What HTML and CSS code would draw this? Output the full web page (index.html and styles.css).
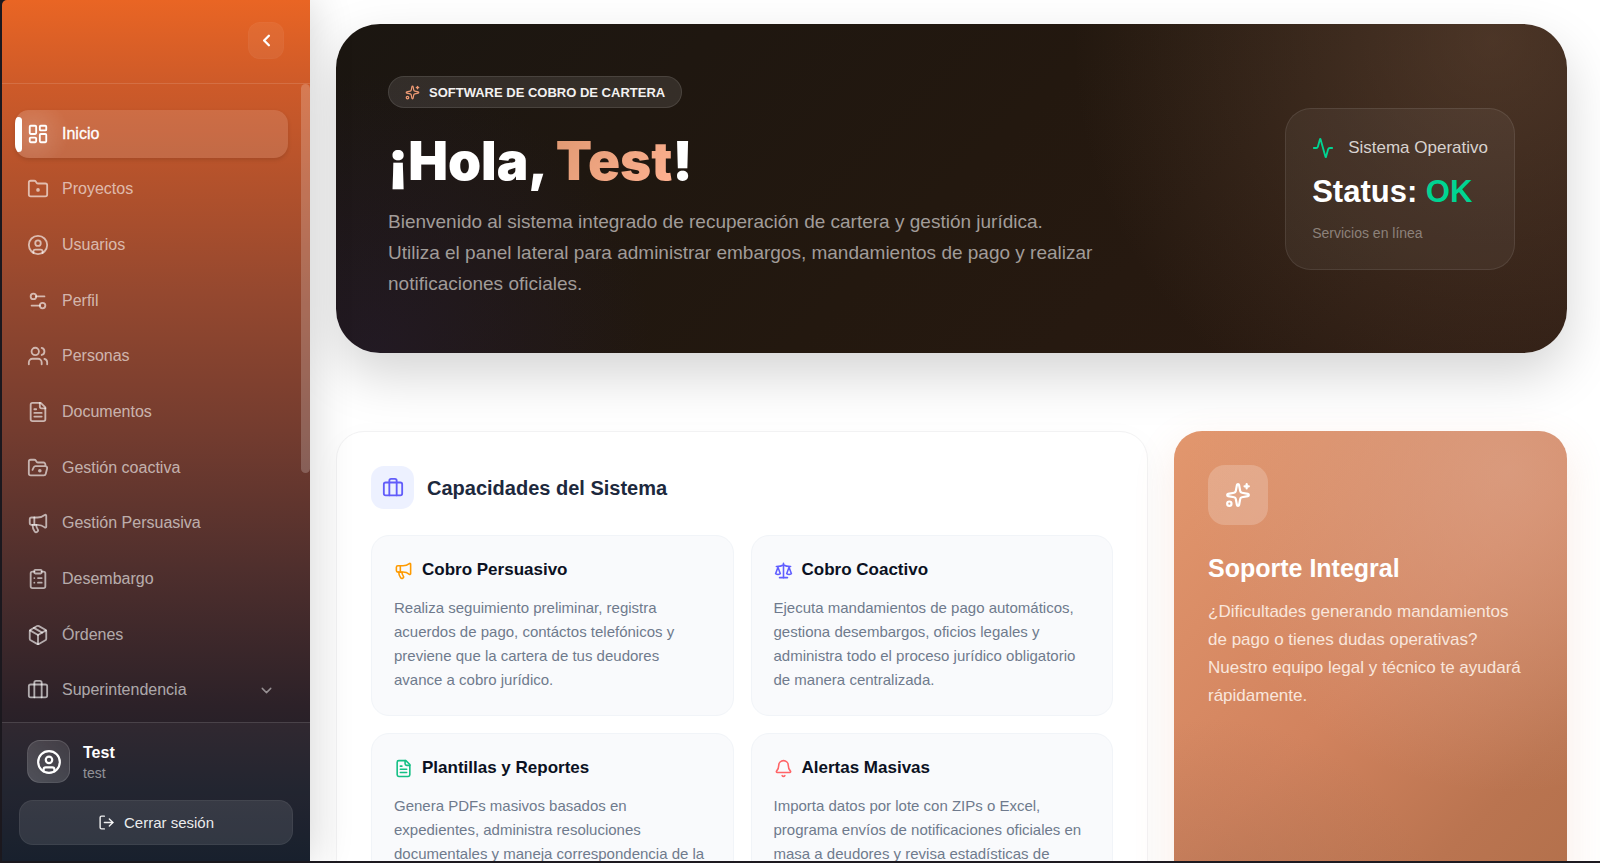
FILE: index.html
```html
<!DOCTYPE html>
<html lang="es">
<head>
<meta charset="utf-8">
<meta name="viewport" content="width=device-width, initial-scale=1">
<title>Inicio</title>
<link rel="stylesheet" href="styles.css">
</head>
<body>
<svg class="sprite" aria-hidden="true">
  <symbol id="i-dashboard" viewBox="0 0 24 24"><rect width="7" height="9" x="3" y="3" rx="1"/><rect width="7" height="5" x="14" y="3" rx="1"/><rect width="7" height="9" x="14" y="12" rx="1"/><rect width="7" height="5" x="3" y="16" rx="1"/></symbol>
  <symbol id="i-folder-dot" viewBox="0 0 24 24"><path d="M4 20h16a2 2 0 0 0 2-2V8a2 2 0 0 0-2-2h-7.93a2 2 0 0 1-1.66-.9l-.82-1.2A2 2 0 0 0 7.93 3H4a2 2 0 0 0-2 2v13c0 1.1.9 2 2 2Z"/><circle cx="12" cy="13" r="1"/></symbol>
  <symbol id="i-user" viewBox="0 0 24 24"><circle cx="12" cy="12" r="10"/><circle cx="12" cy="10" r="3"/><path d="M7 20.662V19a2 2 0 0 1 2-2h6a2 2 0 0 1 2 2v1.662"/></symbol>
  <symbol id="i-settings" viewBox="0 0 24 24"><path d="M14 17H5"/><path d="M19 7h-9"/><circle cx="17" cy="17" r="3"/><circle cx="7" cy="7" r="3"/></symbol>
  <symbol id="i-users" viewBox="0 0 24 24"><path d="M16 21v-2a4 4 0 0 0-4-4H6a4 4 0 0 0-4 4v2"/><path d="M16 3.128a4 4 0 0 1 0 7.744"/><path d="M22 21v-2a4 4 0 0 0-3-3.87"/><circle cx="9" cy="7" r="4"/></symbol>
  <symbol id="i-file" viewBox="0 0 24 24"><path d="M15 2H6a2 2 0 0 0-2 2v16a2 2 0 0 0 2 2h12a2 2 0 0 0 2-2V7Z"/><path d="M14 2v4a2 2 0 0 0 2 2h4"/><path d="M10 9H8"/><path d="M16 13H8"/><path d="M16 17H8"/></symbol>
  <symbol id="i-folder-open" viewBox="0 0 24 24"><path d="m6 14 1.45-2.9A2 2 0 0 1 9.24 10H20a2 2 0 0 1 1.94 2.5l-1.55 6a2 2 0 0 1-1.94 1.5H4a2 2 0 0 1-2-2V5c0-1.1.9-2 2-2h3.93a2 2 0 0 1 1.66.9l.82 1.2a2 2 0 0 0 1.66.9H18a2 2 0 0 1 2 2v2"/><circle cx="14" cy="15" r="1"/></symbol>
  <symbol id="i-megaphone" viewBox="0 0 24 24"><path d="M11 6a13 13 0 0 0 8.4-2.8A1 1 0 0 1 21 4v12a1 1 0 0 1-1.6.8A13 13 0 0 0 11 14H5a2 2 0 0 1-2-2V8a2 2 0 0 1 2-2z"/><path d="M6 14a12 12 0 0 0 2.4 7.2 2 2 0 0 0 3.2-2.4A8 8 0 0 1 10 14"/><path d="M8 6v8"/></symbol>
  <symbol id="i-clipboard" viewBox="0 0 24 24"><rect width="8" height="4" x="8" y="2" rx="1"/><path d="M16 4h2a2 2 0 0 1 2 2v14a2 2 0 0 1-2 2H6a2 2 0 0 1-2-2V6a2 2 0 0 1 2-2h2"/><path d="M12 11h4"/><path d="M12 16h4"/><path d="M8 11h.01"/><path d="M8 16h.01"/></symbol>
  <symbol id="i-package" viewBox="0 0 24 24"><path d="M11 21.73a2 2 0 0 0 2 0l7-4A2 2 0 0 0 21 16V8a2 2 0 0 0-1-1.73l-7-4a2 2 0 0 0-2 0l-7 4A2 2 0 0 0 3 8v8a2 2 0 0 0 1 1.73z"/><path d="M12 22V12"/><path d="M3.29 7 12 12l8.71-5"/><path d="m7.5 4.27 9 5.15"/></symbol>
  <symbol id="i-briefcase" viewBox="0 0 24 24"><path d="M16 20V4a2 2 0 0 0-2-2h-4a2 2 0 0 0-2 2v16"/><rect width="20" height="14" x="2" y="6" rx="2"/></symbol>
  <symbol id="i-down" viewBox="0 0 24 24"><path d="m6 9 6 6 6-6"/></symbol>
  <symbol id="i-left" viewBox="0 0 24 24"><path d="m15 18-6-6 6-6"/></symbol>
  <symbol id="i-logout" viewBox="0 0 24 24"><path d="m16 17 5-5-5-5"/><path d="M21 12H9"/><path d="M9 21H5a2 2 0 0 1-2-2V5a2 2 0 0 1 2-2h4"/></symbol>
  <symbol id="i-sparkles" viewBox="0 0 24 24"><path d="M11.017 2.814a1 1 0 0 1 1.966 0l1.051 5.558a2 2 0 0 0 1.594 1.594l5.558 1.051a1 1 0 0 1 0 1.966l-5.558 1.051a2 2 0 0 0-1.594 1.594l-1.051 5.558a1 1 0 0 1-1.966 0l-1.051-5.558a2 2 0 0 0-1.594-1.594l-5.558-1.051a1 1 0 0 1 0-1.966l5.558-1.051a2 2 0 0 0 1.594-1.594z"/><path d="M20 2v4"/><path d="M22 4h-4"/><circle cx="4" cy="20" r="2"/></symbol>
  <symbol id="i-activity" viewBox="0 0 24 24"><path d="M22 12h-2.48a2 2 0 0 0-1.93 1.46l-2.35 8.36a.25.25 0 0 1-.48 0L9.24 2.18a.25.25 0 0 0-.48 0l-2.35 8.36A2 2 0 0 1 4.49 12H2"/></symbol>
  <symbol id="i-scale" viewBox="0 0 24 24"><path d="M12 3v18"/><path d="m19 8 3 8a5 5 0 0 1-6 0zV7"/><path d="M3 7h1a17 17 0 0 0 8-2 17 17 0 0 0 8 2h1"/><path d="m5 8 3 8a5 5 0 0 1-6 0zV7"/><path d="M7 21h10"/></symbol>
  <symbol id="i-bell" viewBox="0 0 24 24"><path d="M10.268 21a2 2 0 0 0 3.464 0"/><path d="M3.262 15.326A1 1 0 0 0 4 17h16a1 1 0 0 0 .74-1.673C19.41 13.956 18 12.499 18 8A6 6 0 0 0 6 8c0 4.499-1.411 5.956-2.738 7.326"/></symbol>
</svg>
<div class="app">
  <aside class="sidebar">
    <div class="sidebar-head">
      <button class="collapse" type="button" aria-label="Contraer menú"><svg class="icon icon-md"><use href="#i-left"/></svg></button>
    </div>
    <nav class="nav">
      <ul class="nav-list">
        <li><a class="nav-link active" href="#inicio"><svg class="icon icon-lg"><use href="#i-dashboard"/></svg>Inicio</a></li>
        <li><a class="nav-link" href="#proyectos"><svg class="icon icon-lg"><use href="#i-folder-dot"/></svg>Proyectos</a></li>
        <li><a class="nav-link" href="#usuarios"><svg class="icon icon-lg"><use href="#i-user"/></svg>Usuarios</a></li>
        <li><a class="nav-link" href="#perfil"><svg class="icon icon-lg"><use href="#i-settings"/></svg>Perfil</a></li>
        <li><a class="nav-link" href="#personas"><svg class="icon icon-lg"><use href="#i-users"/></svg>Personas</a></li>
        <li><a class="nav-link" href="#documentos"><svg class="icon icon-lg"><use href="#i-file"/></svg>Documentos</a></li>
        <li><a class="nav-link" href="#coactiva"><svg class="icon icon-lg"><use href="#i-folder-open"/></svg>Gestión coactiva</a></li>
        <li><a class="nav-link" href="#persuasiva"><svg class="icon icon-lg"><use href="#i-megaphone"/></svg>Gestión Persuasiva</a></li>
        <li><a class="nav-link" href="#desembargo"><svg class="icon icon-lg"><use href="#i-clipboard"/></svg>Desembargo</a></li>
        <li><a class="nav-link" href="#ordenes"><svg class="icon icon-lg"><use href="#i-package"/></svg>Órdenes</a></li>
        <li><button class="nav-link" type="button" aria-expanded="false"><svg class="icon icon-lg"><use href="#i-briefcase"/></svg>Superintendencia<svg class="icon icon-sm chevron"><use href="#i-down"/></svg></button></li>
      </ul>
      <span class="scroll-thumb"></span>
    </nav>
    <div class="account">
      <div class="user">
        <span class="avatar"><svg class="icon icon-xl"><use href="#i-user"/></svg></span>
        <div class="user-text"><strong>Test</strong><span>test</span></div>
      </div>
      <button class="logout" type="button"><svg class="icon icon-sm"><use href="#i-logout"/></svg>Cerrar sesión</button>
    </div>
  </aside>
  <main class="main">
    <section class="hero">
      <div class="hero-text">
        <div class="badge"><svg class="icon icon-xs"><use href="#i-sparkles"/></svg>SOFTWARE DE COBRO DE CARTERA</div>
        <h1>¡Hola, <span class="name">Test</span>!</h1>
        <p>Bienvenido al sistema integrado de recuperación de cartera y gestión jurídica.<br>Utiliza el panel lateral para administrar embargos, mandamientos de pago y realizar notificaciones oficiales.</p>
      </div>
      <div class="status">
        <div class="status-head"><svg class="icon icon-lg"><use href="#i-activity"/></svg>Sistema Operativo</div>
        <div class="status-value">Status: <span>OK</span></div>
        <div class="status-note">Servicios en línea</div>
      </div>
    </section>
    <div class="panels">
      <section class="capabilities">
        <header class="cap-head">
          <span class="cap-icon"><svg class="icon icon-lg"><use href="#i-briefcase"/></svg></span>
          <h2>Capacidades del Sistema</h2>
        </header>
        <div class="features">
          <article class="feature">
            <h3><svg class="icon icon-md amber"><use href="#i-megaphone"/></svg>Cobro Persuasivo</h3>
            <p>Realiza seguimiento preliminar, registra acuerdos de pago, contáctos telefónicos y previene que la cartera de tus deudores avance a cobro jurídico.</p>
          </article>
          <article class="feature">
            <h3><svg class="icon icon-md indigo"><use href="#i-scale"/></svg>Cobro Coactivo</h3>
            <p>Ejecuta mandamientos de pago automáticos, gestiona desembargos, oficios legales y administra todo el proceso jurídico obligatorio de manera centralizada.</p>
          </article>
          <article class="feature">
            <h3><svg class="icon icon-md green"><use href="#i-file"/></svg>Plantillas y Reportes</h3>
            <p>Genera PDFs masivos basados en expedientes, administra resoluciones documentales y maneja correspondencia de la</p>
          </article>
          <article class="feature">
            <h3><svg class="icon icon-md red"><use href="#i-bell"/></svg>Alertas Masivas</h3>
            <p>Importa datos por lote con ZIPs o Excel, programa envíos de notificaciones oficiales en masa a deudores y revisa estadísticas de</p>
          </article>
        </div>
      </section>
      <section class="support">
        <span class="support-icon"><svg class="icon icon-xl"><use href="#i-sparkles"/></svg></span>
        <h2>Soporte Integral</h2>
        <p>¿Dificultades generando mandamientos de pago o tienes dudas operativas? Nuestro equipo legal y técnico te ayudará rápidamente.</p>
      </section>
    </div>
  </main>
</div>
</body>
</html>
```
FILE: styles.css
```css
* { box-sizing: border-box; }

body {
  margin: 0;
  height: 100vh;
  padding: 0 0 2px 2px;
  overflow: hidden;
  background: #1d1a20;
  font-family: "Liberation Sans", Arial, sans-serif;
  font-size: 16px;
}

h1, h2, h3, p, ul { margin: 0; padding: 0; }
button { font: inherit; cursor: pointer; }

.sprite { position: absolute; width: 0; height: 0; }

.icon {
  flex: none;
  fill: none;
  stroke: currentColor;
  stroke-width: 2;
  stroke-linecap: round;
  stroke-linejoin: round;
}
.icon-xs { width: 15px; height: 15px; }
.icon-sm { width: 17px; height: 17px; }
.icon-md { width: 19px; height: 19px; }
.icon-lg { width: 22px; height: 22px; }
.icon-xl { width: 26px; height: 26px; }

.app {
  display: grid;
  grid-template-columns: 308px minmax(0, 1fr);
  height: 100%;
}

/* Sidebar */
.sidebar {
  display: flex;
  flex-direction: column;
  min-height: 0;
  z-index: 1;
  border-top-left-radius: 5px;
  color: #fff;
  background: linear-gradient(180deg, #e96524 0%, #cd5a29 10%, #95482f 34%, #743c2f 50%, #4f2f2d 66%, #2c2128 82%, #1a1d28 92%, #0f1725 100%);
  box-shadow: 4px 0 40px rgba(0, 0, 0, 0.16);
}

.sidebar-head {
  display: flex;
  justify-content: flex-end;
  padding: 22px 26px 24px;
  border-bottom: 1px solid rgba(255, 255, 255, 0.13);
}

.collapse {
  display: grid;
  place-items: center;
  width: 36px;
  height: 37px;
  padding: 0;
  border: 1px solid rgba(255, 255, 255, 0.02);
  border-radius: 12px;
  background: rgba(255, 255, 255, 0.06);
  color: #fff;
}
.collapse .icon { stroke-width: 3; }

.nav {
  position: relative;
  display: flex;
  flex: 1;
  min-height: 0;
  padding: 26px 22px 0 13px;
}

.nav-list {
  display: flex;
  flex: 1;
  flex-direction: column;
  list-style: none;
}
.nav-list li { flex: 1; padding-bottom: 8px; }

.nav-link {
  display: flex;
  align-items: center;
  gap: 13px;
  width: 100%;
  height: 100%;
  padding: 0 13px 0 12px;
  border: 0;
  border-radius: 14px;
  background: transparent;
  color: rgba(255, 255, 255, 0.62);
  text-align: left;
  text-decoration: none;
}
.nav-link.active {
  position: relative;
  overflow: hidden;
  color: #fff;
  background: radial-gradient(circle at 18px 50%, rgba(255, 255, 255, 0.14), transparent 36px), rgba(255, 255, 255, 0.13);
  box-shadow: 0 2px 4px rgba(0, 0, 0, 0.12);
  -webkit-text-stroke: 0.3px #fff;
}
.nav-link.active::before {
  content: "";
  position: absolute;
  left: 0;
  top: 7px;
  bottom: 6px;
  width: 7px;
  border-radius: 6px;
  background: #fff;
}
.nav-link .chevron { margin-left: auto; opacity: 0.8; }

.scroll-thumb {
  position: absolute;
  top: 0;
  right: 0;
  width: 9px;
  height: 61%;
  border-radius: 5px;
  background: rgba(255, 255, 255, 0.2);
}

.account {
  padding: 17px 17px 16px;
  border-top: 1px solid rgba(255, 255, 255, 0.12);
  background: rgba(255, 255, 255, 0.04);
}
.user { display: flex; align-items: center; gap: 13px; padding: 0 8px 17px; }
.avatar {
  display: grid;
  place-items: center;
  width: 43px;
  height: 43px;
  border: 1px solid rgba(255, 255, 255, 0.12);
  border-radius: 13px;
  background: linear-gradient(45deg, rgba(255, 255, 255, 0.2), rgba(255, 255, 255, 0.1));
}
.user-text { display: flex; flex-direction: column; padding-top: 3px; line-height: 20px; }
.user-text span { font-size: 14px; color: rgba(255, 255, 255, 0.5); }

.logout {
  display: flex;
  align-items: center;
  justify-content: center;
  gap: 9px;
  width: 100%;
  height: 45px;
  border: 1px solid rgba(255, 255, 255, 0.06);
  border-radius: 14px;
  background: rgba(255, 255, 255, 0.1);
  color: rgba(255, 255, 255, 0.92);
  font-size: 15px;
}

/* Content */
.main {
  min-width: 0;
  overflow: hidden;
  padding: 24px 33px 0 26px;
  background: #fff;
}

.hero {
  display: flex;
  align-items: center;
  justify-content: space-between;
  gap: 52px;
  min-height: 329px;
  padding: 52px;
  border-radius: 44px;
  color: #fff;
  background:
    radial-gradient(circle at 94% 5%, rgba(130, 95, 72, 0.4), transparent 420px),
    radial-gradient(circle at 3% 100%, rgba(40, 30, 70, 0.35), transparent 280px),
    linear-gradient(135deg, #1b1611 0%, #23180f 50%, #2c1b12 100%);
  box-shadow: 0 22px 52px rgba(0, 0, 0, 0.17);
}
.hero-text { max-width: 730px; }

.badge {
  display: flex;
  align-items: center;
  gap: 9px;
  width: fit-content;
  height: 32px;
  padding: 0 16px;
  border: 1px solid rgba(255, 255, 255, 0.1);
  border-radius: 16px;
  background: rgba(255, 255, 255, 0.1);
  color: #f3f1f0;
  font-size: 13px;
  font-weight: 700;
}
.badge .icon { color: #ee9a74; }

h1 {
  margin: 22px 0 14px;
  font-family: "Arial Black", Inter, sans-serif;
  font-size: 53px;
  font-weight: 900;
  line-height: 62px;
}
.name {
  color: transparent;
  background: linear-gradient(135deg, #df9871, #ffb292);
  background-clip: text;
  -webkit-background-clip: text;
}
.hero-text p {
  padding-bottom: 2px;
  color: #a19c99;
  font-size: 19px;
  line-height: 31px;
}

.status {
  flex: none;
  padding: 26px;
  border: 1px solid rgba(255, 255, 255, 0.09);
  border-radius: 26px;
  background: rgba(255, 255, 255, 0.05);
}
.status-head {
  display: flex;
  align-items: center;
  gap: 14px;
  height: 26px;
  color: #d8d2cf;
  font-size: 17px;
}
.status-head .icon { color: #00d492; }
.status-value {
  margin: 13px 0;
  font-size: 31px;
  font-weight: 700;
  line-height: 36px;
}
.status-value span { color: #00d492; }
.status-note { color: #8c817a; font-size: 14px; line-height: 20px; }

.panels {
  display: grid;
  grid-template-columns: minmax(0, 812fr) minmax(0, 393fr);
  gap: 26px;
  margin-top: 78px;
}

.capabilities {
  padding: 34px;
  border: 1px solid #f2f2f3;
  border-radius: 28px;
  background: #fff;
  box-shadow: 0 8px 30px rgba(0, 0, 0, 0.03);
}
.cap-head { display: flex; align-items: center; gap: 13px; margin-bottom: 26px; }
.cap-icon {
  display: grid;
  place-items: center;
  width: 43px;
  height: 43px;
  border-radius: 13px;
  background: #edf1ff;
  color: #625dfa;
}
.cap-head h2 { color: #1d293d; font-size: 20px; line-height: 28px; }

.features { display: grid; grid-template-columns: repeat(2, minmax(0, 1fr)); gap: 17px; }
.feature {
  min-height: 181px;
  padding: 21px 22px;
  border: 1px solid #f1f4f8;
  border-radius: 18px;
  background: #f9fafc;
}
.feature h3 {
  display: flex;
  align-items: center;
  gap: 9px;
  margin-bottom: 13px;
  color: #0b1122;
  font-size: 17px;
  line-height: 26px;
}
.feature p { color: #6f7a8d; font-size: 15px; line-height: 24px; }
.amber { color: #fe9a00; }
.indigo { color: #615fff; }
.green { color: #13bf84; }
.red { color: #ff6467; }

.support {
  padding: 34px;
  border-radius: 28px;
  color: #fff;
  background:
    radial-gradient(circle at 85% 8%, rgba(220, 165, 140, 0.65), transparent 320px),
    radial-gradient(circle at 10% 100%, rgba(170, 112, 82, 0.6), transparent 230px),
    linear-gradient(135deg, #e2976e 0%, #d2835e 48%, #ba7450 76%, #b06f4a 100%);
  box-shadow: 0 14px 40px rgba(215, 130, 90, 0.16);
}
.support-icon {
  display: grid;
  place-items: center;
  width: 60px;
  height: 60px;
  border-radius: 17px;
  background: rgba(255, 255, 255, 0.2);
}
.support h2 { margin: 27px 0 14px; font-size: 25px; line-height: 32px; }
.support p { max-width: 322px; color: #f9e6dc; font-size: 17px; line-height: 28px; }
```
